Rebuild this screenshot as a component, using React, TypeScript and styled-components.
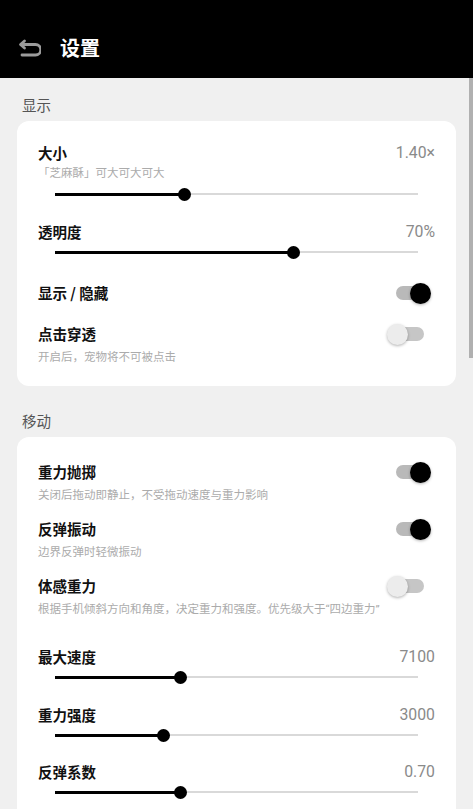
import React from "react";
import styled, { createGlobalStyle } from "styled-components";

const Global = createGlobalStyle`
  html, body { margin: 0; padding: 0; overflow: hidden; background: #f0f0f0; }
  body { font-family: Roboto, "Noto Sans CJK SC", sans-serif; }
  * { box-sizing: border-box; }
`;

const Screen = styled.div`
  position: relative;
  width: 473px;
  height: 809px;
  display: flex;
  flex-direction: column;
  overflow: hidden;
  background: #f0f0f0;
`;

const Header = styled.header`
  flex: 0 0 78px;
  background: #000;
  display: flex;
  align-items: center;
  padding: 18px 0 0 17px;
  gap: 19px;
`;

const BackIcon = styled.svg`
  width: 24px;
  height: 20px;
  display: block;
  color: #9b9b9b;
`;

const Title = styled.h1`
  margin: 0;
  color: #fff;
  font-family: "Noto Sans CJK SC", sans-serif;
  font-size: 20px;
  font-weight: 700;
  line-height: 24px;
`;

const Content = styled.main`
  flex: 1;
  overflow: hidden;
  padding: 17px 17px 0 17px;
  display: flex;
  flex-direction: column;
  gap: 25px;
`;

const ScrollThumb = styled.div`
  position: absolute;
  right: 0;
  top: 78px;
  width: 4px;
  height: 280px;
  background: #b0b0b0;
`;

const Section = styled.section`
  display: flex;
  flex-direction: column;
`;

const SectionLabel = styled.div`
  font-family: "Noto Sans CJK SC", sans-serif;
  font-size: 14.5px;
  line-height: 20px;
  color: #555;
  padding-left: 5px;
  margin-bottom: 6px;
`;

const Card = styled.div<{ $top: number }>`
  background: #fff;
  border-radius: 12px;
  padding: ${(p) => p.$top}px 21px 21px 21px;
  display: flex;
  flex-direction: column;
`;

const Row = styled.div<{ $gap: number }>`
  margin-top: ${(p) => p.$gap}px;
  display: flex;
  flex-direction: column;
`;

const HeadLine = styled.div`
  display: flex;
  align-items: center;
  justify-content: space-between;
  height: 20px;
`;

const ItemTitle = styled.div`
  font-family: "Noto Sans CJK SC", sans-serif;
  font-size: 14.5px;
  font-weight: 700;
  color: #111;
  line-height: 20px;
`;

const Value = styled.div`
  font-family: Roboto, sans-serif;
  font-size: 15.8px;
  color: #8a8a8a;
  line-height: 20px;
`;

const Sub = styled.div<{ $gap: number }>`
  margin-top: ${(p) => p.$gap}px;
  font-family: Roboto, "Noto Sans CJK SC", sans-serif;
  font-size: 11.5px;
  color: #ababab;
  line-height: 16px;
  white-space: nowrap;
`;

const SliderBox = styled.div<{ $gap: number }>`
  margin-top: ${(p) => p.$gap}px;
  height: 20px;
  padding: 0 17px;
  display: flex;
  align-items: center;
`;

const Track = styled.div`
  position: relative;
  flex: 1;
  height: 2px;
  background: #d9d9d9;
`;

const Active = styled.div`
  position: absolute;
  left: 0;
  top: -0.5px;
  height: 3px;
  background: #000;
`;

const Thumb = styled.div`
  position: absolute;
  top: 50%;
  width: 13px;
  height: 13px;
  margin: -6.5px 0 0 -6.5px;
  border-radius: 50%;
  background: #000;
`;

const Toggle = styled.div`
  position: relative;
  width: 44px;
  height: 22px;
  margin-right: 4px;
  flex: none;
`;

const ToggleTrack = styled.div<{ $on: boolean }>`
  position: absolute;
  left: 9px;
  top: 4px;
  width: 28px;
  height: 14px;
  border-radius: 7px;
  background: ${(p) => (p.$on ? "#b9b9b9" : "#c6c6c6")};
`;

const ToggleKnob = styled.div<{ $on: boolean }>`
  position: absolute;
  top: 0.5px;
  left: ${(p) => (p.$on ? 23 : 0)}px;
  width: 21px;
  height: 21px;
  border-radius: 50%;
  background: ${(p) => (p.$on ? "#000" : "#ececec")};
  box-shadow: 0 1px 3px rgba(0, 0, 0, 0.3);
`;

const SwitchLine = styled.div`
  display: flex;
  align-items: center;
  justify-content: space-between;
  height: 20px;
`;

function Slider({ title, value, sub, pct, gap }: { title: string; value: string; sub?: string; pct: number; gap: number }) {
  return (
    <Row $gap={gap}>
      <HeadLine>
        <ItemTitle>{title}</ItemTitle>
        <Value>{value}</Value>
      </HeadLine>
      {sub && <Sub $gap={2}>{sub}</Sub>}
      <SliderBox $gap={sub ? 3 : 0}>
        <Track>
          <Active style={{ width: `${pct}%` }} />
          <Thumb style={{ left: `${pct}%` }} />
        </Track>
      </SliderBox>
    </Row>
  );
}

function Switch({ title, sub, on, gap }: { title: string; sub?: string; on: boolean; gap: number }) {
  return (
    <Row $gap={gap}>
      <SwitchLine>
        <ItemTitle>{title}</ItemTitle>
        <Toggle>
          <ToggleTrack $on={on} />
          <ToggleKnob $on={on} />
        </Toggle>
      </SwitchLine>
      {sub && <Sub $gap={5}>{sub}</Sub>}
    </Row>
  );
}

export default function App() {
  return (
    <>
      <Global />
      <Screen>
        <Header>
          <BackIcon viewBox="0 0 24 20" fill="none" stroke="currentColor" strokeWidth={2.8} strokeLinecap="round" strokeLinejoin="round">
            <path d="M4.5 6.5 H18.5 A5.25 5.25 0 0 1 18.5 17 H5" />
            <path d="M7.5 3 L3.5 6.5 L7.5 10" />
          </BackIcon>
          <Title>设置</Title>
        </Header>
        <Content>
          <Section>
            <SectionLabel>显示</SectionLabel>
            <Card $top={22}>
              <Slider title="大小" value="1.40×" sub="「芝麻酥」可大可大可大" pct={35.8} gap={0} />
              <Slider title="透明度" value="70%" pct={65.8} gap={18} />
              <Switch title="显示 / 隐藏" on gap={21} />
              <Switch title="点击穿透" sub="开启后，宠物将不可被点击" on={false} gap={21} />
            </Card>
          </Section>
          <Section>
            <SectionLabel>移动</SectionLabel>
            <Card $top={25}>
              <Switch title="重力抛掷" sub="关闭后拖动即静止，不受拖动速度与重力影响" on gap={0} />
              <Switch title="反弹振动" sub="边界反弹时轻微振动" on gap={16} />
              <Switch title="体感重力" sub="根据手机倾斜方向和角度，决定重力和强度。优先级大于“四边重力”" on={false} gap={16} />
              <Slider title="最大速度" value="7100" pct={34.7} gap={30} />
              <Slider title="重力强度" value="3000" pct={29.8} gap={18} />
              <Slider title="反弹系数" value="0.70" pct={34.7} gap={17} />
            </Card>
          </Section>
        </Content>
        <ScrollThumb />
      </Screen>
    </>
  );
}
